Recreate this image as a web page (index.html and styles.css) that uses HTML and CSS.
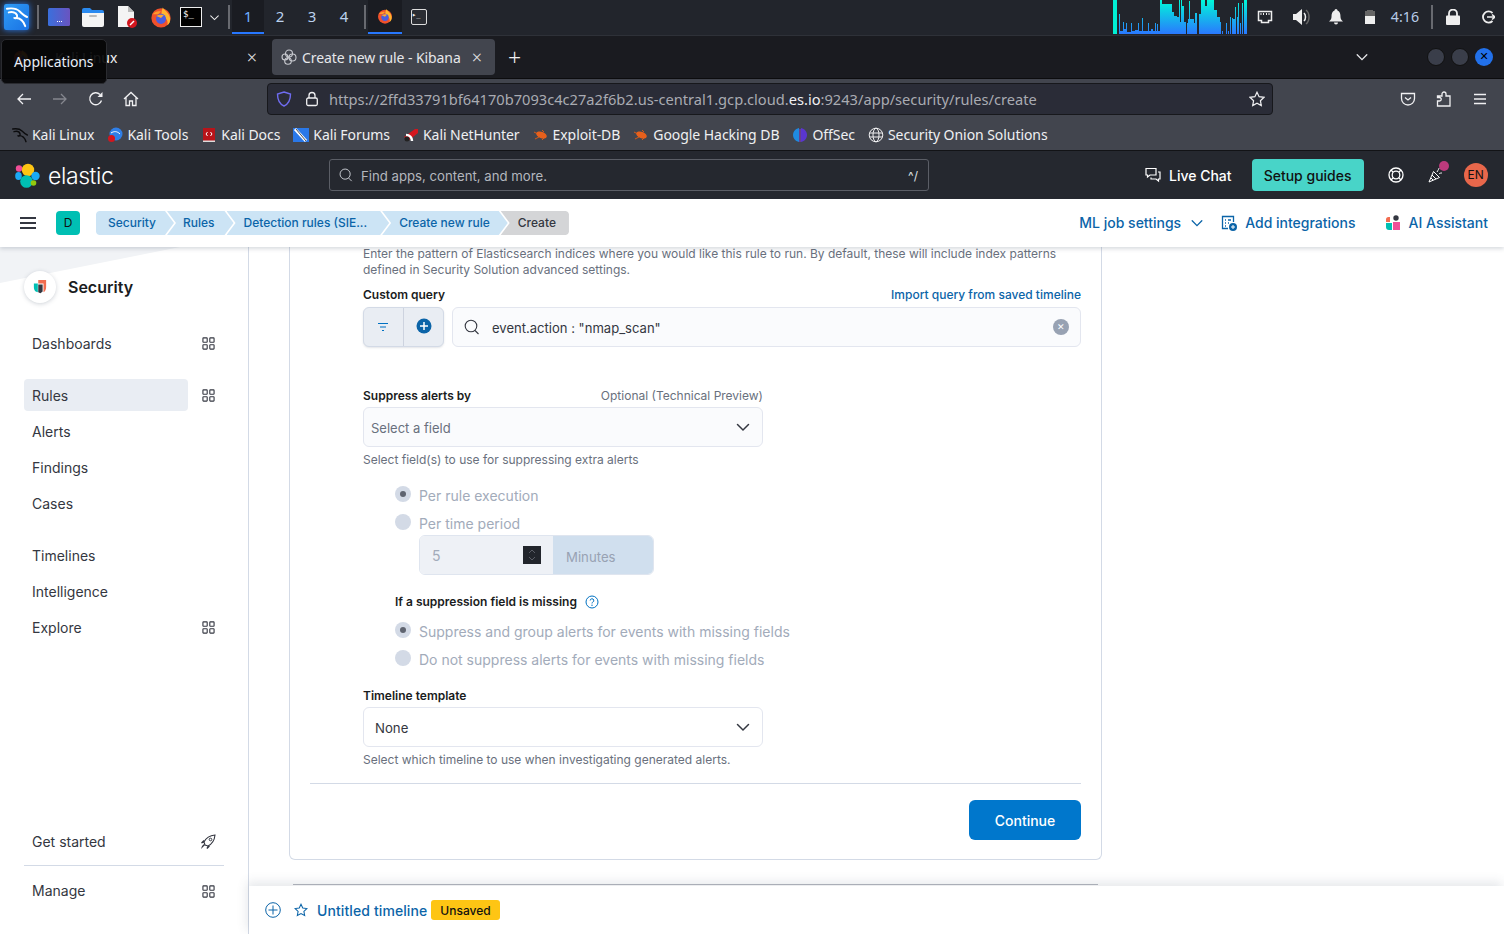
FILE: index.html
```html
<!DOCTYPE html>
<html lang="en">
<head>
  <meta charset="UTF-8">
  <title>Create new rule - Kibana</title>
  <link rel="stylesheet" href="styles.css">
</head>
<body>

<svg class="sprites" width="0" height="0">
  <defs>
    <symbol id="apps" viewBox="0 0 14 14">
      <g fill="none" stroke="#343741" stroke-width="1.200">
        <rect x="1" y="1" width="4.600" height="4.600" rx=".6"/><rect x="8.400" y="1" width="4.600" height="4.600" rx=".6"/>
        <rect x="1" y="8.400" width="4.600" height="4.600" rx=".6"/><rect x="8.400" y="8.400" width="4.600" height="4.600" rx=".6"/>
      </g>
    </symbol>
    <symbol id="chev" viewBox="0 0 16 16">
      <path d="M2.500 5.500 8 11l5.500-5.500" fill="none" stroke="currentColor" stroke-width="1.500" stroke-linecap="round"/>
    </symbol>
    <symbol id="fox" viewBox="0 0 24 24">
      <circle cx="12" cy="13" r="10.500" fill="#f0512c"/>
      <path d="M14 1.500c1 3 7 5 8 12 .3 3-1 6-3 7.500 1-4-1-9-5-9-2-2-2-6 0-10.500z" fill="#ffb52e"/>
      <path d="M3 9c2-3 6-4 9-3l-3 3z" fill="#ff9a2a"/>
      <circle cx="12" cy="14" r="5.500" fill="#4a5ee0"/>
      <path d="M7 11c2-1.500 5-2 8-1l-3 3z" fill="#ffa62e"/>
    </symbol>
    <symbol id="roach" viewBox="0 0 16 16">
      <path d="M1 5l4 2M2 12l4-2M9 3l2 2M9 13l2-2" stroke="#d85a16" stroke-width="1"/>
      <ellipse cx="8.500" cy="8" rx="5.500" ry="3.200" fill="#e8601c" transform="rotate(20 8.500 8)"/>
    </symbol>
    <symbol id="dragon" viewBox="0 0 24 24">
      <g fill="none" stroke="currentColor" stroke-width="2.100" stroke-linecap="round">
        <path d="M1 3c6-1 11 0 14 3 3 3 5 5 8 6"/>
        <path d="M3 7c4-1 8 0 9 3 1 3-2 4-3 3"/>
        <path d="M11 13c4 0 8 3 10 9"/>
      </g>
    </symbol>
  </defs>
</svg>

<div class="panel">
  <div class="panel-menu">
    <svg width="22" height="22" class="kali-dragon"><use href="#dragon"/></svg>
  </div>
  <span class="panel-sep"></span>
  <span class="launcher launcher-first">
    <svg viewBox="0 0 22 18" width="22" height="18"><defs><linearGradient id="wing" x1="0" x2="1"><stop offset="0" stop-color="#3a6fdc"/><stop offset="1" stop-color="#6a54c0"/></linearGradient></defs><rect width="22" height="18" rx="1.500" fill="url(#wing)"/><path d="M9 13h1v1H9zM11 13h1v1h-1zM13 13h1v1h-1z" fill="#fff"/></svg>
  </span>
  <span class="launcher">
    <svg viewBox="0 0 22 20" width="22" height="20"><path d="M0 3a2 2 0 0 1 2-2h6l2 2h10a2 2 0 0 1 2 2v3H0z" fill="#2a8af0"/><path d="M0 6h22v12a2 2 0 0 1-2 2H2a2 2 0 0 1-2-2z" fill="#f4f4f4"/><rect x="7" y="8" width="8" height="2" rx="1" fill="#bbb"/></svg>
  </span>
  <span class="launcher">
    <svg viewBox="0 0 22 22" width="22" height="22"><path d="M2 0h10l6 6v15H2z" fill="#f4f4f4"/><path d="M12 0l6 6h-6z" fill="#bbb"/><circle cx="16" cy="17" r="5" fill="#d2161e"/><path d="M14 19l4-4" stroke="#fff" stroke-width="1.500"/></svg>
  </span>
  <span class="launcher"><svg width="22" height="22"><use href="#fox"/></svg></span>
  <span class="launcher launcher-term">
    <span class="term-box">$_</span>
  </span>
  <svg class="panel-chev" width="11" height="11"><use href="#chev"/></svg>
  <span class="panel-sep sep-a"></span>
  <span class="ws ws-on">1</span>
  <span class="ws">2</span>
  <span class="ws">3</span>
  <span class="ws">4</span>
  <span class="panel-sep sep-b"></span>
  <span class="task task-on"><svg width="16" height="16"><use href="#fox"/></svg></span>
  <span class="task"><span class="term-small">▸_</span></span>

  <svg class="viz" viewBox="0 0 134 34" width="134" height="34">
    <defs><linearGradient id="vizfill" gradientUnits="userSpaceOnUse" x1="0" y1="0" x2="0" y2="34"><stop offset="0" stop-color="#00f8d8"/><stop offset="1" stop-color="#2a78ff"/></linearGradient></defs>
    <rect width="4" height="34" fill="#00f0d4"/>
    <path fill="url(#vizfill)" d="M6 34v-20h1v20zM7 34v-3h3v3zM10 34v-12h1v12zM11 34v-5h2v5zM13 34v-11h1v11zM14 34v-2h4v2zM18 34v-11h1v11zM19 34v-3h3v3zM22 34v-4h3v4zM25 34v-11h1v11zM26 34v-3h3v3zM29 34v-16h1v16zM30 34v-3h5v3zM35 34v-11h1v11zM36 34v-3h2v3zM38 34v-5h2v5zM40 34v-3h2v3zM42 34v-11h1v11zM43 34v-3h1v3zM44 34v-10h1v10zM45 34v-3h2v3zM47 34v-34h2v34zM49 34v-30h10v30zM59 34v-22h2v22zM61 34v-18h3v18zM64 34v-17h2v17zM66 34v-34h1v34zM67 34v-12h1v12zM68 34v-34h1v34zM69 34v-28h2v28zM71 34v-12h2v12zM74 34v-11h1v11zM75 34v-15h6v15zM76 34v-33h1v33zM81 34v-11h1v11zM82 34v-21h2v21zM86 34v-20h2v20zM88 34v-34h4v34zM92 34v-28h2v28zM94 34v-34h7v34zM101 34v-24h3v24zM104 34v-17h3v17zM107 34v-12h1v12zM109 34v-3h1v3zM113 34v-11h1v11zM115 34v-3h1v3zM117 34v-17h1v17zM119 34v-16h1v16zM120 34v-15h2v15zM122 34v-27h1v27zM124 34v-17h1v17zM125 34v-31h1v31zM127 34v-11h1v11zM129 34v-31h1v31zM131 34v-34h3v34z"/>
  </svg>
  <span class="tray tray-net">
    <svg viewBox="0 0 16 14" width="16" height="14"><path d="M1.500 1.500h13v9h-3v2h-7v-2h-3z" fill="none" stroke="#eee" stroke-width="1.500"/><path d="M4 3v2M6.500 3v2M9.500 3v2M12 3v2" stroke="#eee"/></svg>
  </span>
  <span class="tray tray-vol">
    <svg viewBox="0 0 18 16" width="18" height="16"><path d="M0 5h3l6-5v16l-6-5H0z" fill="#eee"/><path d="M11 4c2 2 2 6 0 8" fill="none" stroke="#eee" stroke-width="1.500"/><path d="M13 1c4 3 4 11 0 14" fill="none" stroke="#666" stroke-width="1.500"/></svg>
  </span>
  <span class="tray tray-bell">
    <svg viewBox="0 0 14 16" width="14" height="16"><path d="M7 0a1.500 1.500 0 0 1 1.500 1.500C11 2.500 11.500 5 11.500 8c0 2 1 3 2.500 4.500H0C1.500 11 2.500 10 2.500 8c0-3 .5-5.500 3-6.500A1.500 1.500 0 0 1 7 0zM5 13.500h4a2 2 0 0 1-4 0z" fill="#eee"/></svg>
  </span>
  <span class="tray tray-bat">
    <svg viewBox="0 0 10 14" width="10" height="14"><path d="M2 0h6v1h2v5H0V1h2z" fill="#666"/><rect y="6" width="10" height="8" fill="#eee"/></svg>
  </span>
  <span class="clock">4:16</span>
  <span class="panel-sep sep-c"></span>
  <span class="tray tray-lock">
    <svg viewBox="0 0 14 16" width="14" height="16"><path d="M3 7V4.500a4 4 0 0 1 8 0V7" fill="none" stroke="#eee" stroke-width="1.800"/><rect y="6.500" width="14" height="9.500" rx="1" fill="#eee"/></svg>
  </span>
  <span class="tray tray-out">
    <svg viewBox="0 0 14 14" width="14" height="14"><path d="M11.500 3A5.600 5.600 0 1 0 11.500 11" fill="none" stroke="#eee" stroke-width="1.800"/><path d="M6 7h8M11 4.500 14 7l-3 2.500" fill="none" stroke="#eee" stroke-width="1.600"/></svg>
  </span>
</div>

<div class="tabbar">
  <div class="tab tab-idle">
    <svg class="tab-fav" width="16" height="16"><use href="#fox"/></svg>
    <span class="tab-idle-text">Kali Linux</span>
    <span class="tab-x">×</span>
  </div>
  <div class="tab tab-on">
    <svg viewBox="0 0 16 16" width="16" height="16" fill="none" stroke="#c8cad0" stroke-width="1.100"><circle cx="8" cy="4.500" r="3.500"/><circle cx="4" cy="8" r="3"/><circle cx="11.500" cy="8.500" r="3.500"/><circle cx="7" cy="12" r="3.300"/></svg>
    <span class="tab-title">Create new rule - Kibana</span>
    <span class="tab-x">×</span>
  </div>
  <span class="tab-plus">+</span>
  <svg class="tab-list" width="14" height="14"><use href="#chev"/></svg>
  <span class="winbtn"></span>
  <span class="winbtn"></span>
  <span class="winbtn winbtn-close">✕</span>
</div>

<div class="navbar">
  <svg class="nav-ico nav-back" viewBox="0 0 16 16" width="16" height="16"><path d="M15 8H2M7 3 2 8l5 5" fill="none" stroke="#f0f0f2" stroke-width="1.300"/></svg>
  <svg class="nav-ico nav-fwd" viewBox="0 0 16 16" width="16" height="16"><path d="M1 8h13M9 3l5 5-5 5" fill="none" stroke="#85878e" stroke-width="1.300"/></svg>
  <svg class="nav-ico nav-reload" viewBox="0 0 16 16" width="16" height="16"><path d="M13.500 9.500A6 6 0 1 1 12 3.500" fill="none" stroke="#f0f0f2" stroke-width="1.300"/><path d="M14.500 1v5h-5z" fill="#f0f0f2"/></svg>
  <svg class="nav-ico nav-home" viewBox="0 0 16 16" width="16" height="16"><path d="M1 8l7-6.500L15 8M3 6.500V14.500h3.500V10h3v4.500H13V6.500" fill="none" stroke="#f0f0f2" stroke-width="1.300"/></svg>
  <div class="urlbar">
    <svg class="url-shield" viewBox="0 0 16 16" width="16" height="16"><path d="M8 1l6.500 2c0 6-2 10-6.500 12C3.500 13 1.500 9 1.500 3z" fill="none" stroke="#6f6cf0" stroke-width="1.400"/></svg>
    <svg class="url-lock" viewBox="0 0 14 16" width="14" height="16"><path d="M4 7V4.500a3 3 0 0 1 6 0V7" fill="none" stroke="#f0f0f2" stroke-width="1.300"/><rect x="1.700" y="7" width="10.600" height="7.500" rx="1.500" fill="none" stroke="#f0f0f2" stroke-width="1.300"/></svg>
    <span class="url-text">https://2ffd33791bf64170b7093c4c27a2f6b2.us-central1.gcp.cloud.<b>es.io</b>:9243/app/security/rules/create</span>
    <svg class="url-star" viewBox="0 0 16 16" width="16" height="16"><path d="M8 1.200l2.100 4.500 4.900.6-3.600 3.400.9 4.900L8 12.200l-4.300 2.400.9-4.900L1 6.300l4.900-.6z" fill="none" stroke="#f0f0f2" stroke-width="1.200"/></svg>
  </div>
  <svg class="nav-ico nav-pocket" viewBox="0 0 16 16" width="16" height="16"><path d="M1.500 2.500h13v5a6.500 6.500 0 0 1-13 0z" fill="none" stroke="#f0f0f2" stroke-width="1.300"/><path d="M5 6.500l3 2.500 3-2.500" fill="none" stroke="#f0f0f2" stroke-width="1.300"/></svg>
  <svg class="nav-ico nav-puzzle" viewBox="0 0 16 16" width="16" height="16"><path d="M1.500 15V10H3.500a1.700 1.700 0 1 0 0-3.500H1.500V5H6V3a2 2 0 0 1 4 0v2h4v10z" fill="none" stroke="#f0f0f2" stroke-width="1.300"/></svg>
  <svg class="nav-ico nav-menu" viewBox="0 0 16 16" width="16" height="16"><path d="M2 3.500h12M2 8h12M2 12.500h12" stroke="#f0f0f2" stroke-width="1.300"/></svg>
</div>

<div class="bookmarks">
  <span class="bm"><svg class="bm-ico bm-dragon" width="16" height="16"><use href="#dragon"/></svg>Kali Linux</span>
  <span class="bm"><svg class="bm-ico" viewBox="0 0 16 16" width="16" height="16"><circle cx="9" cy="7" r="6.500" fill="#2f7fe8"/><path d="M4 6c3-2 6-2 9 1" stroke="#fff" fill="none"/><circle cx="4.500" cy="11.500" r="3.500" fill="#d2161e"/></svg>Kali Tools</span>
  <span class="bm"><svg class="bm-ico" viewBox="0 0 16 16" width="16" height="16"><path d="M2 1h12v14H2z" fill="#b8141a"/><path d="M2 13.500h12V15H2z" fill="#ddd"/><path d="M6.500 5 5 7l1.500 2M9.500 5 11 7 9.500 9" stroke="#fff" fill="none"/></svg>Kali Docs</span>
  <span class="bm"><svg class="bm-ico" viewBox="0 0 16 16" width="16" height="16"><path d="M0 1h16v14H0z" fill="#2a78e8"/><path d="M2 2l11 12" stroke="#fff" stroke-width="3"/><path d="M3 2l10 12" stroke="#222" stroke-width=".8"/></svg>Kali Forums</span>
  <span class="bm"><svg class="bm-ico" viewBox="0 0 16 16" width="16" height="16"><path d="M1 10 12 2h3v4L5 14z" fill="#d2161e"/><path d="M3 8c4 0 6 3 6 6" stroke="#fff" stroke-width="2.500" fill="none"/><circle cx="4" cy="12" r="2.500" fill="#222"/></svg>Kali NetHunter</span>
  <span class="bm"><svg class="bm-ico" width="16" height="16"><use href="#roach"/></svg>Exploit-DB</span>
  <span class="bm"><svg class="bm-ico" width="16" height="16"><use href="#roach"/></svg>Google Hacking DB</span>
  <span class="bm"><svg class="bm-ico" viewBox="0 0 16 16" width="16" height="16"><path d="M7 1C3 2 1 5 1 8s2 6 6 7z" fill="#1f8ae0"/><path d="M9 1c4 1 6 4 6 7s-2 6-6 7z" fill="#5a36d0"/><path d="M8 2v13" stroke="#8a3ad0"/></svg>OffSec</span>
  <span class="bm"><svg class="bm-ico" viewBox="0 0 16 16" width="16" height="16" fill="none" stroke="#f0f0f2"><circle cx="8" cy="8" r="6.800"/><ellipse cx="8" cy="8" rx="3" ry="6.800"/><path d="M1.500 6h13M1.500 10h13"/></svg>Security Onion Solutions</span>
</div>

<header class="k-header">
  <svg class="k-logo" viewBox="0 0 25 25" width="25" height="25">
    <circle cx="13" cy="7" r="6.200" fill="#fec514"/>
    <circle cx="4" cy="5.500" r="3.200" fill="#f04e98"/>
    <circle cx="20.500" cy="13" r="4.200" fill="#1ba9f5"/>
    <ellipse cx="3.500" cy="13" rx="3.300" ry="4" fill="#1ba9f5"/>
    <circle cx="11.500" cy="18.500" r="6.300" fill="#00bfb3"/>
    <circle cx="18.500" cy="20" r="2.800" fill="#93c90e"/>
  </svg>
  <span class="k-word">elastic</span>
  <div class="k-search">
    <svg viewBox="0 0 16 16" width="14" height="14"><circle cx="7" cy="7" r="5.800" fill="none" stroke="#c9ccd2" stroke-width="1.100"/><path d="M11 11.500l3.500 3.500" stroke="#c9ccd2" stroke-width="1.100"/></svg>
    <span class="k-search-text">Find apps, content, and more.</span>
    <span class="k-search-key">^/</span>
  </div>
  <svg class="k-chat-ico" viewBox="0 0 16 16" width="16" height="16"><path d="M1 1.500h10v6.500H5L2.500 10V8H1z" fill="none" stroke="#fff" stroke-width="1.200"/><path d="M13 5h2v7h-1.500v2L11 12H6v-1.500" fill="none" stroke="#fff" stroke-width="1.200"/></svg>
  <span class="k-chat">Live Chat</span>
  <span class="k-setup">Setup guides</span>
  <svg class="k-help" viewBox="0 0 16 16" width="16" height="16" fill="none" stroke="#fff" stroke-width="1.300"><circle cx="8" cy="8" r="7"/><circle cx="8" cy="8" r="3.800"/><path d="M3 3l2.200 2.200M13 3l-2.200 2.200M3 13l2.200-2.200M13 13l-2.200-2.200"/></svg>
  <span class="k-news">
    <svg viewBox="0 0 16 16" width="16" height="16" fill="none" stroke="#fff"><path d="M1 15 5.500 4.500l6 6z"/><path d="M4 8l4 4M3 11l2 2"/><path d="M9 5c1-2 2-3 2-4M11 7c1-1 2-1 3-1"/></svg>
    <span class="k-news-dot"></span>
  </span>
  <span class="k-avatar">EN</span>
</header>

<div class="k-crumbbar">
  <span class="k-burger"><i></i><i></i><i></i></span>
  <span class="k-space">D</span>
  <nav class="crumbs">
    <span class="crumb crumb-a">Security</span>
    <span class="crumb crumb-b">Rules</span>
    <span class="crumb crumb-c">Detection rules (SIE...</span>
    <span class="crumb crumb-d">Create new rule</span>
    <span class="crumb crumb-last">Create</span>
  </nav>
  <span class="k-link k-ml">ML job settings</span>
  <svg class="k-ml-chev" width="14" height="14"><use href="#chev"/></svg>
  <svg class="k-int-ico" viewBox="0 0 16 16" width="16" height="16"><path d="M7 13.500H1.500v-12h11V7M4 5h1M7 5h3M4 8h1M7 8h1M4 11h1" fill="none" stroke="#0b64a8" stroke-width="1.300"/><circle cx="12" cy="12" r="4" fill="#0b64a8"/><path d="M12 10v4M10 12h4" stroke="#fff"/></svg>
  <span class="k-link k-int">Add integrations</span>
  <svg class="k-ai-ico" viewBox="0 0 16 16" width="16" height="16"><path d="M1 2h4v5H1V4.500A2.500 2.500 0 0 1 3.500 2z" fill="#f26d50"/><path d="M1 8h6v7H4a3 3 0 0 1-3-3z" fill="#00bfb3"/><circle cx="11" cy="3" r="2.700" fill="#343741"/><rect x="8" y="7" width="7" height="8" fill="#f04e98"/></svg>
  <span class="k-link k-ai">AI Assistant</span>
</div>

<div class="k-body">
  <aside class="side">
    <div class="side-head">
      <span class="side-logo">
        <svg viewBox="0 0 16 18" width="14" height="16"><path d="M6 1h9v8c0 3-1 5-3 6V5H6z" fill="#f26d50"/><path d="M1 5h4.500v10L3 14c-1.500-1-2-3-2-5z" fill="#00bfb3"/><path d="M6 6h5v8l-2.500 2L6 15z" fill="#343741"/></svg>
      </span>
      <span class="side-title">Security</span>
    </div>
    <ul class="side-nav">
      <li class="side-row"><span class="side-item">Dashboards</span><svg class="side-apps"><use href="#apps"/></svg></li>
    </ul>
    <ul class="side-nav">
      <li class="side-row"><span class="side-item side-on">Rules</span><svg class="side-apps"><use href="#apps"/></svg></li>
      <li class="side-row"><span class="side-item">Alerts</span></li>
      <li class="side-row"><span class="side-item">Findings</span></li>
      <li class="side-row"><span class="side-item">Cases</span></li>
    </ul>
    <ul class="side-nav">
      <li class="side-row"><span class="side-item">Timelines</span></li>
      <li class="side-row"><span class="side-item">Intelligence</span></li>
      <li class="side-row"><span class="side-item">Explore</span><svg class="side-apps"><use href="#apps"/></svg></li>
    </ul>
    <div class="side-bottom">
      <div class="side-row"><span class="side-item">Get started</span>
        <svg class="side-rocket" viewBox="0 0 16 16" width="16" height="16"><path d="M5 11 4 8c2-4 6-6.500 11-7-.5 5-3 9-7 11zM4 8l-2.500 1L4 6.500M8 12l-1 2.500 2.500-2.500" fill="none" stroke="#343741" stroke-width="1.100"/><path d="M5 11l-4 4 1-3 2-2z" fill="#343741"/><circle cx="10.500" cy="5.500" r="1.300" fill="none" stroke="#343741"/></svg>
      </div>
      <div class="side-rule"></div>
      <div class="side-row"><span class="side-item">Manage</span><svg class="side-apps"><use href="#apps"/></svg></div>
    </div>
  </aside>

  <div class="page">
    <main class="page-scroll">
      <section class="card">
        <form class="form">
          <p class="help help-top">Enter the pattern of Elasticsearch indices where you would like this rule to run. By default, these will include index patterns defined in Security Solution advanced settings.</p>

          <div class="label-row label-query"><label class="lbl">Custom query</label><a class="import">Import query from saved timeline</a></div>
          <div class="query">
            <div class="query-btns">
              <span class="query-btn query-filter">
                <svg viewBox="0 0 12 10" width="12" height="10"><path d="M1 1.500h10M3 5h6M5 8.500h2" stroke="#0071c2" stroke-width="1.100"/></svg>
              </span>
              <span class="query-btn query-plus">
                <svg viewBox="0 0 16 16" width="16" height="16"><circle cx="8" cy="8" r="7.500" fill="#0b64a8"/><path d="M8 4v8M4 8h8" stroke="#fff" stroke-width="1.500"/></svg>
              </span>
            </div>
            <div class="query-input">
              <svg viewBox="0 0 16 16" width="16" height="16"><circle cx="7" cy="7" r="5.800" fill="none" stroke="#343741" stroke-width="1.100"/><path d="M11 11.500l3.500 3.500" stroke="#343741" stroke-width="1.100"/></svg>
              <span class="query-text">event.action : "nmap_scan"</span>
              <span class="query-clear">✕</span>
            </div>
          </div>

          <div class="label-row label-suppress"><label class="lbl">Suppress alerts by</label><span class="optional">Optional (Technical Preview)</span></div>
          <div class="select select-tinted"><span class="select-ph">Select a field</span><svg width="16" height="16"><use href="#chev"/></svg></div>
          <p class="help help-under">Select field(s) to use for suppressing extra alerts</p>

          <div class="radios radios-first">
            <div class="radio-row"><span class="radio radio-on"></span><span class="radio-text">Per rule execution</span></div>
            <div class="radio-row"><span class="radio"></span><span class="radio-text">Per time period</span></div>
          </div>
          <div class="period">
            <div class="period-num"><span>5</span><span class="spin"><svg viewBox="0 0 10 14" width="10" height="14"><path d="M2 5l3-3 3 3M2 9l3 3 3-3" fill="none" stroke="#5a5d66"/></svg></span></div>
            <div class="period-unit">Minutes</div>
          </div>

          <div class="missing"><label class="lbl">If a suppression field is missing</label>
            <svg viewBox="0 0 14 14" width="14" height="14"><circle cx="7" cy="7" r="6" fill="none" stroke="#0071c2" stroke-width="1"/><path d="M5.200 5.500a1.800 1.800 0 1 1 2.500 1.700c-.5.200-.7.500-.7 1v.300" fill="none" stroke="#0071c2"/><circle cx="7" cy="10.300" r=".7" fill="#0071c2"/></svg>
          </div>
          <div class="radios radios-second">
            <div class="radio-row"><span class="radio radio-on"></span><span class="radio-text">Suppress and group alerts for events with missing fields</span></div>
            <div class="radio-row"><span class="radio"></span><span class="radio-text">Do not suppress alerts for events with missing fields</span></div>
          </div>

          <div class="label-row label-template"><label class="lbl">Timeline template</label></div>
          <div class="select"><span class="select-val">None</span><svg width="16" height="16"><use href="#chev"/></svg></div>
          <p class="help help-under">Select which timeline to use when investigating generated alerts.</p>
        </form>
        <div class="card-rule"></div>
        <div class="card-foot"><button class="continue" type="button">Continue</button></div>
      </section>
      <div class="card-next"></div>
    </main>

    <footer class="tl-bar">
      <svg viewBox="0 0 16 16" width="16" height="16"><circle cx="8" cy="8" r="7.300" fill="none" stroke="#0b64a8" stroke-width="1"/><path d="M8 3.500v9M3.500 8h9" stroke="#0b64a8"/></svg>
      <svg class="tl-star" viewBox="0 0 16 16" width="14" height="14"><path d="M8 1.500l2 4.300 4.700.6-3.400 3.200.9 4.700L8 12l-4.200 2.300.9-4.700L1.300 6.400 6 5.800z" fill="none" stroke="#0b64a8" stroke-width="1.200"/></svg>
      <span class="tl-title">Untitled timeline</span>
      <span class="tl-badge">Unsaved</span>
    </footer>
  </div>
</div>

<div class="tip">Applications</div>

</body>
</html>
```

FILE: styles.css
```css
* {
  box-sizing: border-box;
}

html, body {
  margin: 0;
  height: 934px;
  overflow: hidden;
}

body {
  display: flex;
  flex-direction: column;
  position: relative;
  font-family: Inter, sans-serif;
  background: #fff;
}

.sprites {
  position: absolute;
}

svg {
  display: block;
  flex: none;
}

/* desktop panel */
.panel {
  height: 36px;
  flex: none;
  display: flex;
  align-items: center;
  padding-bottom: 1px;
  background: #22252c;
  border-bottom: 1px solid #2e3138;
  font-family: "Noto Sans", sans-serif;
  color: #e8e8ea;
}

.panel-menu {
  width: 25px;
  height: 26px;
  margin-left: 4px;
  background: linear-gradient(135deg, #2f9cf5, #1a72e4);
  border-radius: 2px;
  box-shadow: 0 0 6px #2a7cf0;
  display: flex;
  align-items: center;
  justify-content: center;
  flex: none;
}

.kali-dragon {
  color: #fff;
}

.panel-sep {
  width: 2px;
  height: 24px;
  background: #686a70;
  margin-left: 8px;
  flex: none;
}

.launcher {
  display: flex;
  justify-content: center;
  width: 22px;
  margin-left: 12px;
  flex: none;
}

.launcher-first {
  margin-left: 9px;
}

.launcher-term {
  margin-left: 8px;
}

.term-box {
  width: 22px;
  height: 20px;
  background: #000;
  border: 1px solid #eee;
  font: 9px/12px "DejaVu Sans Mono", monospace;
  color: #fff;
  padding-left: 2px;
}

.panel-chev {
  color: #eee;
  margin-left: 7px;
}

.sep-a {
  margin-left: 8px;
}

.ws {
  width: 32px;
  height: 34px;
  line-height: 33px;
  text-align: center;
  font-size: 15px;
  color: #bcd2ee;
  flex: none;
}

.ws-on {
  margin-left: 2px;
  background: #1a1c22;
  border-bottom: 2px solid #2777ff;
  color: #6fb0ff;
}

.sep-b {
  margin-left: 4px;
}

.task {
  width: 34px;
  height: 34px;
  display: flex;
  align-items: center;
  justify-content: center;
  flex: none;
}

.task-on {
  margin-left: 2px;
  background: #1a1c22;
  border-bottom: 2px solid #2777ff;
}

.term-small {
  width: 16px;
  height: 16px;
  border: 1px solid #ddd;
  border-radius: 2px;
  background: #2b2d33;
  font: 7px/10px "DejaVu Sans Mono", monospace;
  color: #eee;
}

.viz {
  margin-left: auto;
}

.tray {
  display: flex;
  justify-content: center;
  flex: none;
}

.tray-net { margin-left: 10px; }
.tray-vol { margin-left: 20px; }
.tray-bell { margin-left: 18px; }
.tray-bat { margin-left: 22px; }

.clock {
  margin-left: 16px;
  padding-bottom: 2px;
  font-size: 14.2px;
  color: #b8cce8;
}

.sep-c {
  margin-left: 12px;
}

.tray-lock { margin-left: 13px; }
.tray-out { margin-left: 21px; margin-right: 9px; }

/* tab strip */
.tabbar {
  height: 43px;
  flex: none;
  display: flex;
  align-items: center;
  background: #1a1b20;
  border-bottom: 1px solid #0c0c0e;
  font-family: "Noto Sans", sans-serif;
  color: #f0f0f2;
}

.tab {
  display: flex;
  align-items: center;
  height: 36px;
  flex: none;
}

.tab-idle {
  width: 265px;
  padding: 0 8px 0 13px;
}

.tab-fav {
  margin-right: 26px;
}

.tab-idle-text {
  font-size: 14px;
  letter-spacing: -.08px;
}

.tab-x {
  margin-left: auto;
  font-size: 18px;
  line-height: 18px;
  font-weight: 300;
  color: #e8e8ea;
}

.tab-on {
  width: 223px;
  margin-left: 7px;
  padding: 0 13px 0 9px;
  background: #42454e;
  border-radius: 4px;
}

.tab-title {
  margin-left: 5px;
  font-size: 14px;
  letter-spacing: -.08px;
  white-space: nowrap;
  color: #e6e7ea;
}

.tab-plus {
  margin-left: 13px;
  font-size: 23px;
  line-height: 23px;
  font-weight: 300;
}

.tab-list {
  margin-left: auto;
  color: #e8e8ea;
}

.winbtn {
  width: 18px;
  height: 18px;
  border-radius: 50%;
  background: #3a3e4a;
  border: 1px solid #111;
  flex: none;
  margin-right: 6px;
}

.tab-list + .winbtn {
  margin-left: 58px;
}

.winbtn-close {
  background: #2271ea;
  border: none;
  margin-right: 11px;
  color: #000;
  font: bold 11px/18px "DejaVu Sans", sans-serif;
  text-align: center;
}

/* address bar */
.navbar {
  height: 42px;
  flex: none;
  display: flex;
  align-items: center;
  padding-bottom: 2px;
  background: #42454e;
  font-family: "Noto Sans", sans-serif;
}

.nav-back { margin-left: 16px; }
.nav-fwd { margin-left: 20px; }
.nav-reload { margin-left: 20px; }
.nav-home { margin-left: 19px; }

.urlbar {
  width: 1006px;
  height: 32px;
  margin-left: 128px;
  display: flex;
  align-items: center;
  background: #2a2c37;
  border: 1px solid #17181c;
  border-radius: 4px;
  flex: none;
}

.url-shield { margin-left: 8px; }
.url-lock { margin-left: 13px; }

.url-text {
  margin-left: 10px;
  font-size: 14.65px;
  color: #a9abb2;
  white-space: nowrap;
}

.url-text b {
  font-weight: 400;
  color: #f0f0f2;
}

.url-star {
  margin-left: auto;
  margin-right: 7px;
}

.nav-pocket { margin-left: 127px; }
.nav-puzzle { margin-left: 20px; }
.nav-menu { margin-left: 20px; }

/* bookmarks */
.bookmarks {
  height: 30px;
  flex: none;
  display: flex;
  align-items: center;
  padding: 0 0 2px 12px;
  background: #42454e;
  border-bottom: 1px solid #121316;
  font-family: "Noto Sans", sans-serif;
  font-size: 14px;
  letter-spacing: -.06px;
  color: #eff0f2;
  gap: 13px;
}

.bm {
  display: flex;
  align-items: center;
  white-space: nowrap;
}

.bm-ico {
  margin-right: 4px;
}

.bm-dragon {
  color: #0c0c0e;
}

/* kibana header */
.k-header {
  height: 48px;
  flex: none;
  display: flex;
  align-items: center;
  background: #25282f;
  color: #fff;
}

.k-logo {
  margin-left: 15px;
}

.k-word {
  margin-left: 8px;
  margin-top: 2px;
  font-size: 23px;
  font-weight: 300;
  letter-spacing: -.4px;
  width: 281px;
  flex: none;
}

.k-search {
  width: 600px;
  height: 32px;
  display: flex;
  align-items: center;
  padding: 0 10px 0 9px;
  border: 1px solid #5b5e66;
  border-radius: 3px;
  flex: none;
}

.k-search-text {
  margin-left: 8px;
  margin-top: 2px;
  font-size: 13.2px;
  line-height: 16px;
  color: #b4b7be;
}

.k-search-key {
  margin-left: auto;
  font-size: 12px;
  color: #dfe1e5;
}

.k-chat-ico {
  margin-left: 216px;
}

.k-chat {
  margin-left: 8px;
  font-size: 14px;
  font-weight: 500;
}

.k-setup {
  margin-left: 20px;
  width: 112px;
  height: 32px;
  line-height: 33px;
  text-align: center;
  background: #48d4c8;
  border-radius: 4px;
  font-size: 14px;
  font-weight: 500;
  color: #111;
  flex: none;
}

.k-help {
  margin-left: 24px;
}

.k-news {
  position: relative;
  margin-left: 24px;
}

.k-news-dot {
  position: absolute;
  top: -6px;
  right: -5px;
  width: 10px;
  height: 10px;
  border-radius: 50%;
  background: #bd3a7c;
}

.k-avatar {
  margin-left: 20px;
  width: 24px;
  height: 24px;
  line-height: 24px;
  text-align: center;
  border-radius: 50%;
  background: #e8674b;
  font-size: 12px;
  color: #111;
  flex: none;
}

/* breadcrumb bar */
.k-crumbbar {
  height: 48px;
  flex: none;
  display: flex;
  align-items: center;
  background: #fff;
  box-shadow: 0 2px 4px rgba(65, 78, 101, .2);
  position: relative;
  z-index: 2;
}

.k-burger {
  margin-left: 20px;
  width: 16px;
  display: flex;
  flex-direction: column;
  gap: 3px;
  flex: none;
}

.k-burger i {
  height: 2px;
  background: #343741;
}

.k-space {
  margin-left: 20px;
  width: 24px;
  height: 24px;
  line-height: 24px;
  text-align: center;
  border-radius: 4px;
  background: #00bfb3;
  font-size: 12px;
  color: #111;
  flex: none;
}

.crumbs {
  margin-left: 16px;
  display: flex;
  flex: none;
}

.crumb {
  height: 24px;
  line-height: 24px;
  font-size: 12px;
  font-weight: 500;
  white-space: nowrap;
  color: #0b64a8;
  background: #cce4f5;
  padding: 0 18px 0 17px;
  margin-right: -7px;
  clip-path: polygon(0 0, calc(100% - 9px) 0, 100% 50%, calc(100% - 9px) 100%, 0 100%, 9px 50%);
}

.crumb-a {
  padding-left: 12px;
  clip-path: polygon(3px 0, calc(100% - 9px) 0, 100% 50%, calc(100% - 9px) 100%, 3px 100%, 1px calc(100% - 1px), 0 calc(100% - 3px), 0 3px, 1px 1px);
}

.crumb-b {
  padding-left: 16px;
  padding-right: 19px;
}

.crumb-c {
  padding-right: 22px;
}

.crumb-last {
  background: #d4d5d7;
  color: #343741;
  padding-right: 13px;
  margin-right: 0;
  clip-path: polygon(0 0, calc(100% - 3px) 0, calc(100% - 1px) 1px, 100% 3px, 100% calc(100% - 3px), calc(100% - 1px) calc(100% - 1px), calc(100% - 3px) 100%, 0 100%, 9px 50%);
}

.k-link {
  margin-top: -2px;
  font-size: 14px;
  font-weight: 500;
  color: #0b64a8;
  white-space: nowrap;
}

.k-ml {
  margin-left: auto;
}

.k-ml-chev {
  margin-left: 9px;
  color: #0b64a8;
}

.k-int-ico {
  margin-left: 17px;
}

.k-int {
  margin-left: 8px;
}

.k-ai-ico {
  margin-left: 29px;
}

.k-ai {
  margin-left: 8px;
  margin-right: 16px;
}

/* body split */
.k-body {
  flex: 1;
  min-height: 0;
  display: flex;
}

.side {
  width: 249px;
  flex: none;
  position: relative;
  display: flex;
  flex-direction: column;
  padding-left: 24px;
  border-right: 1px solid #d3dae6;
  color: #343741;
}

.side::before {
  content: "";
  position: absolute;
  top: 0;
  left: 0;
  width: 180px;
  height: 36px;
  background: #f1f3f6;
  clip-path: polygon(0 0, 100% 0, 0 100%);
}

.side-head {
  position: relative;
  display: flex;
  align-items: center;
  height: 32px;
  margin-top: 24px;
}

.side-logo {
  width: 32px;
  height: 32px;
  border-radius: 50%;
  background: #fff;
  box-shadow: 0 1px 4px rgba(65, 78, 101, .25);
  display: flex;
  align-items: center;
  justify-content: center;
  flex: none;
}

.side-title {
  margin-left: 12px;
  font-size: 16px;
  font-weight: 600;
  color: #1a1c21;
}

.side-nav {
  list-style: none;
  margin: 20px 0 0;
  padding: 0;
  display: flex;
  flex-direction: column;
  gap: 4px;
}

.side-head + .side-nav {
  margin-top: 24px;
}

.side-row {
  display: flex;
  align-items: center;
  height: 32px;
}

.side-item {
  width: 164px;
  height: 32px;
  line-height: 34px;
  padding-left: 8px;
  font-size: 14px;
  border-radius: 4px;
  flex: none;
}

.side-on {
  background: #e9edf3;
}

.side-apps {
  width: 13px;
  height: 13px;
  margin-left: 14px;
}

.side-rocket {
  margin-left: 12px;
  margin-top: 2px;
}

.side-bottom {
  margin-top: auto;
  margin-bottom: 28px;
  width: 200px;
}

.side-bottom .side-apps {
  margin-top: 2px;
}

.side-rule {
  height: 1px;
  background: #d3dae6;
  margin: 8px 0;
}

.side-bottom .side-rule + .side-row {
  margin-top: 8px;
}

/* page */
.page {
  flex: 1;
  min-width: 0;
  display: flex;
  flex-direction: column;
}

.page-scroll {
  height: 639px;
  flex: none;
  overflow: hidden;
  padding: 0 0 0 40px;
}

.card {
  width: 813px;
  height: 614px;
  border: 1px solid #d3dae6;
  border-top: none;
  border-radius: 0 0 6px 6px;
  padding: 0 20px;
}

.form {
  padding-left: 53px;
}

.help {
  margin: 0;
  font-size: 12px;
  line-height: 16px;
  color: #69707d;
}

.help-top {
  margin-top: -1px;
  width: 718px;
}

.help-under {
  margin-top: 5px;
}

.lbl {
  font-size: 12px;
  line-height: 18px;
  font-weight: 600;
  color: #1a1c21;
}

.label-row {
  width: 400px;
  height: 16px;
  display: flex;
  align-items: flex-start;
  justify-content: space-between;
  line-height: 18px;
}

.label-query {
  width: 718px;
  margin-top: 8px;
}

.label-suppress {
  margin-top: 40px;
}

.label-template {
  margin-top: 18px;
}

.import {
  font-size: 12px;
  font-weight: 500;
  color: #0b64a8;
}

.optional {
  font-size: 12px;
  color: #69707d;
}

.query {
  display: flex;
  gap: 8px;
  margin-top: 5px;
  width: 718px;
}

.query-btns {
  width: 81px;
  height: 40px;
  display: flex;
  background: #e9edf3;
  border: 1px solid #d3dae6;
  border-radius: 6px;
  box-shadow: 0 1px 2px rgba(65, 78, 101, .15);
  flex: none;
}

.query-btn {
  flex: 1;
  display: flex;
  align-items: center;
  justify-content: center;
}

.query-filter svg {
  margin-left: -2px;
}

.query-plus {
  border-left: 1px solid #cdd3df;
}

.query-plus svg {
  margin-top: -2px;
}

.query-input {
  flex: 1;
  display: flex;
  align-items: center;
  padding: 0 11px 0 11px;
  background: #fafbfd;
  border: 1px solid #e3e6ef;
  border-radius: 6px;
}

.query-text {
  margin-left: 12px;
  margin-top: 2px;
  font-size: 13.05px;
  color: #343741;
}

.query-clear {
  margin-left: auto;
  width: 16px;
  height: 16px;
  line-height: 16px;
  text-align: center;
  border-radius: 50%;
  background: #98a2b3;
  color: #fff;
  font-size: 9px;
}

.select {
  width: 400px;
  height: 40px;
  margin-top: 4px;
  display: flex;
  align-items: center;
  justify-content: space-between;
  padding: 0 11px 0 11px;
  background: #fff;
  border: 1px solid #e3e6ef;
  border-radius: 6px;
  color: #343741;
}

.select-tinted {
  background: #fafbfd;
  padding-left: 7px;
}

.select-ph {
  margin-top: 2px;
  font-size: 13px;
  color: #69707d;
}

.select-val {
  margin-top: 2px;
  font-size: 13.2px;
  color: #343741;
}

.radios {
  margin-left: 32px;
  display: flex;
  flex-direction: column;
  gap: 8px;
}

.radios-first {
  margin-top: 17px;
}

.radios-second {
  margin-top: 11px;
}

.radio-row {
  display: flex;
  align-items: center;
  height: 20px;
}

.radio {
  width: 16px;
  height: 16px;
  margin-top: -3px;
  border-radius: 50%;
  background: #d3dae6;
  display: flex;
  align-items: center;
  justify-content: center;
  flex: none;
}

.radio-on::after {
  content: "";
  width: 6px;
  height: 6px;
  border-radius: 50%;
  background: #5f6470;
}

.radio-text {
  margin-left: 8px;
  font-size: 14px;
  color: #a2abba;
  white-space: nowrap;
}

.period {
  width: 235px;
  height: 40px;
  margin: 2px 0 0 56px;
  display: flex;
  border-radius: 6px;
  border: 1px solid #dfe5ef;
  overflow: hidden;
}

.period-num {
  width: 133px;
  display: flex;
  align-items: center;
  justify-content: space-between;
  padding: 0 12px 0 12px;
  background: #eef1f6;
  font-size: 14px;
  color: #a2abba;
}

.spin {
  width: 18px;
  height: 18px;
  background: #22252c;
  display: flex;
  align-items: center;
  justify-content: center;
}

.period-unit {
  flex: 1;
  line-height: 40px;
  padding: 1px 0 0 13px;
  background: #d0dfee;
  font-size: 13.2px;
  color: #98a2b3;
}

.missing {
  display: flex;
  align-items: center;
  gap: 8px;
  margin: 19px 0 0 32px;
  height: 16px;
}

.missing .lbl {
  line-height: 16px;
}

.card-rule {
  height: 1px;
  background: #d3dae6;
  margin-top: 15px;
}

.card-foot {
  display: flex;
  justify-content: flex-end;
  margin-top: 16px;
}

.continue {
  width: 112px;
  height: 40px;
  background: #0077cc;
  border: none;
  border-radius: 6px;
  font-family: Inter, sans-serif;
  font-size: 14px;
  font-weight: 500;
  color: #fff;
}

.card-next {
  width: 805px;
  height: 1px;
  margin: 24px 0 0 4px;
  background: #b5b8c0;
}

.tl-bar {
  height: 48px;
  flex: none;
  position: relative;
  display: flex;
  align-items: center;
  padding-left: 16px;
  background: #fff;
  box-shadow: -2px -4px 10px rgba(65, 78, 101, .13);
}

.tl-star {
  margin-left: 13px;
}

.tl-title {
  margin-left: 9px;
  margin-top: 1px;
  font-size: 14px;
  font-weight: 500;
  letter-spacing: .1px;
  color: #0b64a8;
}

.tl-badge {
  margin-left: 4px;
  height: 20px;
  line-height: 21px;
  padding: 0 9px;
  background: #fec514;
  border-radius: 3px;
  font-size: 12px;
  font-weight: 500;
  color: #111;
}

/* tooltip over the first tab */
.tip {
  position: absolute;
  top: 39px;
  left: 1px;
  width: 106px;
  height: 45px;
  padding-left: 12px;
  line-height: 43px;
  background: rgba(5, 5, 6, .92);
  border: 1px solid #2a2b30;
  border-radius: 5px;
  font-family: "Noto Sans", sans-serif;
  font-size: 14px;
  letter-spacing: -.08px;
  color: #e8eef8;
}
```
